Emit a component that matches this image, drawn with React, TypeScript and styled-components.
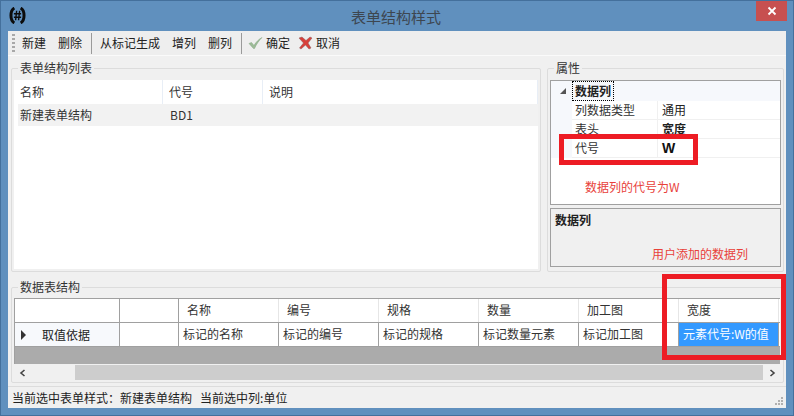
import React from "react";
import styled, { createGlobalStyle } from "styled-components";

const Global = createGlobalStyle`
  html, body { margin: 0; padding: 0; background: #6090be; }
  body { font-family: "Noto Sans CJK SC", "Liberation Sans", sans-serif; font-size: 12px; color: #222; }
  * { box-sizing: border-box; }
`;

const Win = styled.div`
  position: relative; width: 794px; height: 416px; display: flex; flex-direction: column;
  background: #6090be; border: 1px solid #44709c; padding: 0 7px 7px;
`;
const TitleBar = styled.div`
  position: relative; height: 30px; flex: none; display: flex; align-items: center; justify-content: center;
  font-size: 15px; color: #3d4650; padding-right: 2px;
`;
const Logo = styled.svg`position: absolute; left: 1px; top: 6px; width: 17px; height: 17px;`;
const Close = styled.div`
  position: absolute; right: -1px; top: 0; width: 31px; height: 20px; background: #c75050;
  display: flex; align-items: center; justify-content: center;
`;
const Client = styled.div`flex: 1; display: flex; flex-direction: column; background: #f0f0f0; min-height: 0;`;
const Toolbar = styled.div`
  height: 25px; flex: none; display: flex; align-items: center; background: #eeeeee; border-bottom: 1px solid #fafafa; padding-left: 4px;
`;
const Grip = styled.div`
  width: 3px; height: 19px; margin-right: 1px;
  background: repeating-linear-gradient(to bottom, #a8a8a8 0 2px, transparent 2px 4px);
`;
const Tool = styled.div<{ $icon?: boolean }>`
  display: flex; align-items: center; gap: ${(p) => (p.$icon ? 3 : 0)}px; padding: 0 ${(p) => (p.$icon ? 4 : 6)}px;
  height: 22px; line-height: 22px; color: #222; white-space: nowrap;
`;
const Sep = styled.div`width: 1px; height: 21px; background: #9a9a9a; margin: 0 2px 0 3px;`;
const Upper = styled.div`display: flex; gap: 6px; padding: 4px 2px 0 3px; flex: none; height: 216px;`;
const Group = styled.fieldset<{ $w?: number }>`
  margin: 0; padding: 4px 2px 2px 2px; border: 1px solid #dcdcdc; border-radius: 2px; min-width: 0;
  ${(p) => (p.$w ? `width: ${p.$w}px; flex: none;` : "flex: 1;")}
  display: flex; flex-direction: column;
`;
const Legend = styled.legend`padding: 0 2px; margin-left: 4px; line-height: 16px; height: 16px; color: #333;`;
const ListBox = styled.div`flex: 1; background: #fff; display: flex; flex-direction: column;`;
const ListHead = styled.div`display: grid; grid-template-columns: 149px 100px 1fr; height: 24px; align-items: stretch;`;
const ListHeadCell = styled.div`padding-left: 6px; line-height: 24px; border-right: 1px solid #e8eef6; color: #333;`;
const ListRow = styled.div`display: grid; grid-template-columns: 148px 100px 1fr; height: 22px; line-height: 22px; background: #f2f2f2; margin-left: 4px;`;
const ListCell = styled.div<{ $first?: boolean }>`padding-left: ${(p) => (p.$first ? 2 : 4)}px; color: #333;`;
const PropPane = styled.div`flex: 1; display: flex; flex-direction: column; gap: 3px;`;
const PropGrid = styled.div`height: 125px; flex: none; border: 1px solid #a0a0a0; background: #fff; display: flex; flex-direction: column;`;
const CatRow = styled.div`height: 20px; display: flex; align-items: center; background: #f6f8fc; padding-left: 9px; flex: none;`;
const CatArrow = styled.div`width: 0; height: 0; border-style: solid; border-width: 0 0 6px 6px; border-color: transparent transparent #555 transparent; margin-right: 7px;`;
const CatLabel = styled.div`outline: 1px dotted #000; padding: 0 2px; height: 18px; line-height: 17px; font-weight: 700; color: #222;`;
const PropRow = styled.div`height: 19px; display: grid; grid-template-columns: 21px 86px 1fr; flex: none; line-height: 18px;`;
const PropMargin = styled.div`background: #f6f8fc;`;
const PropName = styled.div`padding-left: 3px; border-bottom: 1px solid #f0f0f0; border-right: 1px solid #f0f0f0; color: #333;`;
const PropValue = styled.div<{ $bold?: boolean }>`
  padding-left: 4px; border-bottom: 1px solid #f0f0f0; color: #222;
  font-weight: ${(p) => (p.$bold ? 700 : 400)};
`;
const BigValue = styled.span`font-family: "Liberation Sans", sans-serif; font-size: 14px; color: #111;`;
const Help = styled.div`height: 59px; flex: none; border: 1px solid #a0a0a0; background: #f0f0f0; padding: 3px 4px; font-weight: 700; line-height: 16px; color: #222;`;
const Lower = styled.div`flex: none; height: 111px; padding: 7px 2px 0 3px; display: flex;`;
const DataGrid = styled.div`width: 766px; height: 66px; margin-top: -1px; background: #ababab; border-top: 1px solid #a0a0a0; border-left: 1px solid #a0a0a0; flex: none;`;
const GridRow = styled.div<{ $h: number }>`
  display: grid; grid-template-columns: 105px 59px repeat(6, 100px); height: ${(p) => p.$h}px; background: #fff;
  border-bottom: 1px solid #a0a0a0;
`;
const HeadCell = styled.div`padding-left: 8px; line-height: 22px; border-right: 1px solid #e6e6e6; color: #333;
  &:first-child, &:nth-child(2) { border-right: 1px solid #a0a0a0; }
`;
const RowHeader = styled.div`display: flex; align-items: center; padding-left: 6px; gap: 16px; border-right: 1px solid #a0a0a0; background: #f7f9fc; color: #222;`;
const RowArrow = styled.div`width: 0; height: 0; border-style: solid; border-width: 5px 0 5px 5px; border-color: transparent transparent transparent #333;`;
const Cell = styled.div<{ $sel?: boolean }>`
  padding-left: 4px; line-height: 22px; border-right: 1px solid #a0a0a0; white-space: nowrap; overflow: hidden;
  background: ${(p) => (p.$sel ? "#3399ff" : "#fff")}; color: ${(p) => (p.$sel ? "#fff" : "#333")};
`;
const HScroll = styled.div`height: 15px; width: 766px; margin-top: 1px; display: flex; background: #f0f0f0; flex: none;`;
const ScrollBtn = styled.div`width: 17px; display: flex; align-items: center; justify-content: center; flex: none;`;
const ScrollTrack = styled.div`flex: 1; padding: 0 0 0 44px; display: flex;`;
const ScrollThumb = styled.div`flex: 1; background: #cdcdcd;`;
const Status = styled.div`
  position: relative; flex: 1; border-top: 1px solid #dcdcdc; margin-top: 3px; padding-left: 4px; padding-top: 2px; line-height: 18px; color: #222; white-space: pre;
`;
const ResizeGrip = styled.svg`position: absolute; right: 3px; bottom: 3px; width: 9px; height: 9px;`;
const RedBox = styled.div<{ $l: number; $t: number; $w: number; $h: number }>`
  position: absolute; left: ${(p) => p.$l}px; top: ${(p) => p.$t}px; width: ${(p) => p.$w}px; height: ${(p) => p.$h}px;
  border: 5px solid #ed1c24; pointer-events: none;
`;
const Note = styled.div<{ $l: number; $t: number }>`
  position: absolute; left: ${(p) => p.$l}px; top: ${(p) => p.$t}px; color: #e8413a; line-height: 18px; white-space: nowrap;
`;

const Check = () => (
  <svg width="15" height="14" viewBox="0 0 15 14">
    <path d="M1 7.5 L3.5 6.5 L6 9.5 C8 6 10.5 3.5 14 1.5 C11 4.5 8.5 8 6.5 12.5 L5.5 12.5 Z" fill="#9dbb98" stroke="#7ea27e" strokeWidth="0.5" />
  </svg>
);
const Cross = () => (
  <svg width="15" height="14" viewBox="0 0 15 14">
    <path d="M1 2 L4 1 L8 4.5 L12 1 L14 2 L10 7 L13 12 L11 13 L7.5 9 L3 13 L1.5 12 L5.5 7 Z" fill="#d8403a" stroke="#8a5a5a" strokeWidth="0.5" />
  </svg>
);

const heads = ["名称", "编号", "规格", "数量", "加工图", "宽度"];
const vals = ["标记的名称", "标记的编号", "标记的规格", "标记数量元素", "标记加工图"];

export default function App() {
  return (
    <>
      <Global />
      <Win>
        <TitleBar>
          <Logo viewBox="0 0 16 16">
            <path d="M5 1 C0.8 3.5 0.8 12.5 5 15" fill="none" stroke="#0c0c0c" strokeWidth="2.8" />
            <path d="M11 1 C15.2 3.5 15.2 12.5 11 15" fill="none" stroke="#0c0c0c" strokeWidth="2.8" />
            <path d="M7.2 3.5 L6.2 12.5 M10 3.5 L9 12.5 M4.6 6.4 H11.4 M4.6 9.6 H11.4" stroke="#0c0c0c" strokeWidth="1.3" fill="none" />
          </Logo>
          表单结构样式
          <Close>
            <svg width="10" height="10" viewBox="0 0 10 10">
              <path d="M1.5 1.5 L8.5 8.5 M8.5 1.5 L1.5 8.5" stroke="#fff" strokeWidth="1.8" />
            </svg>
          </Close>
        </TitleBar>
        <Client>
          <Toolbar>
            <Grip />
            <Tool>新建</Tool>
            <Tool>删除</Tool>
            <Sep />
            <Tool>从标记生成</Tool>
            <Tool>增列</Tool>
            <Tool>删列</Tool>
            <Sep />
            <Tool $icon><Check />确定</Tool>
            <Tool $icon><Cross />取消</Tool>
          </Toolbar>
          <Upper>
            <Group $w={530}>
              <Legend>表单结构列表</Legend>
              <ListBox>
                <ListHead>
                  <ListHeadCell>名称</ListHeadCell>
                  <ListHeadCell>代号</ListHeadCell>
                  <ListHeadCell>说明</ListHeadCell>
                </ListHead>
                <ListRow>
                  <ListCell $first>新建表单结构</ListCell>
                  <ListCell>BD1</ListCell>
                  <ListCell />
                </ListRow>
              </ListBox>
            </Group>
            <Group>
              <Legend>属性</Legend>
              <PropPane>
                <PropGrid>
                  <CatRow><CatArrow /><CatLabel>数据列</CatLabel></CatRow>
                  <PropRow><PropMargin /><PropName>列数据类型</PropName><PropValue>通用</PropValue></PropRow>
                  <PropRow><PropMargin /><PropName>表头</PropName><PropValue $bold>宽度</PropValue></PropRow>
                  <PropRow><PropMargin /><PropName>代号</PropName><PropValue $bold><BigValue>W</BigValue></PropValue></PropRow>
                </PropGrid>
                <Help>数据列</Help>
              </PropPane>
            </Group>
          </Upper>
          <Lower>
            <Group>
              <Legend>数据表结构</Legend>
              <DataGrid>
                <GridRow $h={24}>
                  <HeadCell />
                  <HeadCell />
                  {heads.map((h) => <HeadCell key={h}>{h}</HeadCell>)}
                </GridRow>
                <GridRow $h={24}>
                  <RowHeader><RowArrow />取值依据</RowHeader>
                  <Cell />
                  {vals.map((v) => <Cell key={v}>{v}</Cell>)}
                  <Cell $sel>元素代号:W的值</Cell>
                </GridRow>
              </DataGrid>
              <HScroll>
                <ScrollBtn>
                  <svg width="8" height="8" viewBox="0 0 8 8"><path d="M5.5 1 L2 4 L5.5 7" fill="none" stroke="#444" strokeWidth="1.6" /></svg>
                </ScrollBtn>
                <ScrollTrack><ScrollThumb /></ScrollTrack>
                <ScrollBtn>
                  <svg width="8" height="8" viewBox="0 0 8 8"><path d="M2.5 1 L6 4 L2.5 7" fill="none" stroke="#444" strokeWidth="1.6" /></svg>
                </ScrollBtn>
              </HScroll>
            </Group>
          </Lower>
          <Status>
            当前选中表单样式：新建表单结构   当前选中列:单位
            <ResizeGrip viewBox="0 0 9 9">
              <path d="M7 1h2v2H7zM4 4h2v2H4zM7 4h2v2H7zM1 7h2v2H1zM4 7h2v2H4zM7 7h2v2H7z" fill="#b0b0b0" />
            </ResizeGrip>
          </Status>
        </Client>
        <RedBox $l={558} $t={133} $w={139} $h={31} />
        <RedBox $l={661} $t={273} $w={124} $h={86} />
        <Note $l={584} $t={177}>数据列的代号为W</Note>
        <Note $l={651} $t={244}>用户添加的数据列</Note>
      </Win>
    </>
  );
}
